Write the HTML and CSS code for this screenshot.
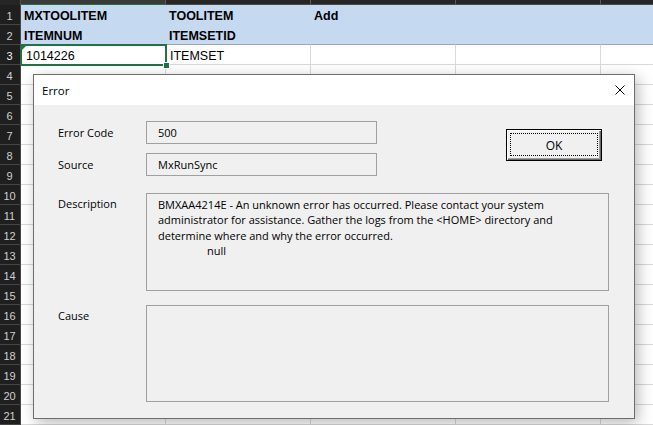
FILE: index.html
```html
<!DOCTYPE html>
<html>
<head>
<meta charset="utf-8">
<link rel="stylesheet" href="styles.css">
</head>
<body>
<div class="sheet">
  <div class="row colhead">
    <div class="corner"></div><div class="ch sel"></div><div class="ch"></div><div class="ch"></div><div class="ch"></div><div class="ch last"></div>
  </div>
  <div class="row blue top"><div class="rn">1</div><div class="c b">MXTOOLITEM</div><div class="c b">TOOLITEM</div><div class="c b">Add</div><div class="c"></div><div class="c last"></div></div>
  <div class="row blue bottom"><div class="rn">2</div><div class="c b">ITEMNUM</div><div class="c b">ITEMSETID</div><div class="c"></div><div class="c"></div><div class="c last"></div></div>
  <div class="row"><div class="rn selrow">3</div><div class="c active">1014226</div><div class="c">ITEMSET</div><div class="c"></div><div class="c"></div><div class="c last"></div></div>
  <div class="row"><div class="rn">4</div><div class="c"></div><div class="c"></div><div class="c"></div><div class="c"></div><div class="c last"></div></div>
  <div class="row"><div class="rn">5</div><div class="c"></div><div class="c"></div><div class="c"></div><div class="c"></div><div class="c last"></div></div>
  <div class="row"><div class="rn">6</div><div class="c"></div><div class="c"></div><div class="c"></div><div class="c"></div><div class="c last"></div></div>
  <div class="row"><div class="rn">7</div><div class="c"></div><div class="c"></div><div class="c"></div><div class="c"></div><div class="c last"></div></div>
  <div class="row"><div class="rn">8</div><div class="c"></div><div class="c"></div><div class="c"></div><div class="c"></div><div class="c last"></div></div>
  <div class="row"><div class="rn">9</div><div class="c"></div><div class="c"></div><div class="c"></div><div class="c"></div><div class="c last"></div></div>
  <div class="row"><div class="rn">10</div><div class="c"></div><div class="c"></div><div class="c"></div><div class="c"></div><div class="c last"></div></div>
  <div class="row"><div class="rn">11</div><div class="c"></div><div class="c"></div><div class="c"></div><div class="c"></div><div class="c last"></div></div>
  <div class="row"><div class="rn">12</div><div class="c"></div><div class="c"></div><div class="c"></div><div class="c"></div><div class="c last"></div></div>
  <div class="row"><div class="rn">13</div><div class="c"></div><div class="c"></div><div class="c"></div><div class="c"></div><div class="c last"></div></div>
  <div class="row"><div class="rn">14</div><div class="c"></div><div class="c"></div><div class="c"></div><div class="c"></div><div class="c last"></div></div>
  <div class="row"><div class="rn">15</div><div class="c"></div><div class="c"></div><div class="c"></div><div class="c"></div><div class="c last"></div></div>
  <div class="row"><div class="rn">16</div><div class="c"></div><div class="c"></div><div class="c"></div><div class="c"></div><div class="c last"></div></div>
  <div class="row"><div class="rn">17</div><div class="c"></div><div class="c"></div><div class="c"></div><div class="c"></div><div class="c last"></div></div>
  <div class="row"><div class="rn">18</div><div class="c"></div><div class="c"></div><div class="c"></div><div class="c"></div><div class="c last"></div></div>
  <div class="row"><div class="rn">19</div><div class="c"></div><div class="c"></div><div class="c"></div><div class="c"></div><div class="c last"></div></div>
  <div class="row"><div class="rn">20</div><div class="c"></div><div class="c"></div><div class="c"></div><div class="c"></div><div class="c last"></div></div>
  <div class="row"><div class="rn">21</div><div class="c"></div><div class="c"></div><div class="c"></div><div class="c"></div><div class="c last"></div></div>
</div>

<div class="dialog">
  <div class="titlebar">
    <span class="title">Error</span>
    <svg class="close" width="10" height="10" viewBox="0 0 10 10"><path d="M0.5 0.5 L9.5 9.5 M9.5 0.5 L0.5 9.5" stroke="#000" stroke-width="1" fill="none"/></svg>
  </div>
  <div class="body">
    <div class="lbl r1">Error Code</div>
    <div class="field r1">500</div>
    <button class="ok">OK</button>
    <div class="lbl r2">Source</div>
    <div class="field r2">MxRunSync</div>
    <div class="lbl lbl-top r3">Description</div>
    <div class="area r3">BMXAA4214E - An unknown error has occurred. Please contact your system<br>administrator for assistance. Gather the logs from the &lt;HOME&gt; directory and<br>determine where and why the error occurred.<br><span class="indent">null</span></div>
    <div class="lbl lbl-top r4">Cause</div>
    <div class="area r4"></div>
  </div>
</div>
</body>
</html>
```

FILE: styles.css
```css
html, body {
  margin: 0;
  padding: 0;
}
body {
  width: 653px;
  height: 425px;
  overflow: hidden;
  background: #ffffff;
  position: relative;
  font-family: "Liberation Sans", Arial, sans-serif;
}

/* ---------- spreadsheet ---------- */
.sheet {
  display: flex;
  flex-direction: column;
}
.row {
  display: flex;
  height: 20px;
}
.colhead {
  height: 5px;
}
.corner {
  width: 21px;
  background: #262626;
  border-right: 1px solid #505050;
  box-sizing: border-box;
}
.ch {
  width: 145px;
  box-sizing: border-box;
  background: #262626;
  border-right: 1px solid #5a5a5a;
  border-bottom: 1px solid #4a4a4a;
}
.ch.sel {
  background: #3a3a3a;
  border-bottom: 1px solid #217346;
}
.ch.last, .c.last {
  flex: 1;
  border-right: none;
}
.rn {
  width: 21px;
  flex: none;
  box-sizing: border-box;
  background: #1f1f1f;
  border-bottom: 1px solid #454545;
  border-right: 1px solid #454545;
  color: #cfcfcf;
  font-family: "Liberation Sans", Arial, sans-serif;
  font-size: 11px;
  line-height: 18px;
  text-align: center;
  padding-top: 2px;
  padding-right: 1px;
}
.rn.selrow {
  color: #f2f2f2;
}
.c {
  width: 145px;
  flex: none;
  box-sizing: border-box;
  border-right: 1px solid #d9d9d9;
  border-bottom: 1px solid #d9d9d9;
  padding: 3px 0 0 4px;
  font-size: 12.5px;
  line-height: 16px;
  color: #000;
  white-space: nowrap;
  overflow: visible;
}
.c.b {
  font-weight: bold;
  padding-left: 3px;
}
.blue .c {
  background: #c5d9f1;
  border-right-color: #c5d9f1;
}
.blue.top .c {
  border-bottom-color: #c5d9f1;
}
.blue.bottom .c {
  border-bottom-color: #a6a6a6;
}
.c.active {
  position: relative;
  z-index: 1;
  outline: 2px solid #217346;
  outline-offset: -1px;
  padding-left: 5px;
}
.c.active::before {
  content: "";
  position: absolute;
  left: 1px;
  top: 1px;
  border-top: 4px solid #217346;
  border-right: 4px solid transparent;
}
.c.active::after {
  content: "";
  position: absolute;
  right: -4px;
  bottom: -4px;
  width: 5px;
  height: 5px;
  background: #217346;
  border: 1px solid #ffffff;
  box-sizing: content-box;
  margin: -1px;
}

/* ---------- dialog ---------- */
.dialog {
  position: absolute;
  left: 33px;
  top: 74px;
  width: 600px;
  border: 1px solid #6e6e6e;
  background: #f0f0f0;
  box-shadow: 3px 4px 14px rgba(0, 0, 0, 0.28);
  font-family: "Open Sans", "Noto Sans", sans-serif;
  font-size: 11px;
  color: #000;
  z-index: 5;
}
.titlebar {
  height: 30px;
  background: #ffffff;
  display: flex;
  align-items: center;
  justify-content: space-between;
  padding: 0 9px 0 8px;
}
.title {
  font-size: 11.5px;
}
.close {
  display: block;
}
.body {
  display: grid;
  grid-template-columns: 88px 231px 1fr;
  padding: 16px 25px 16px 24px;
}
.lbl {
  grid-column: 1;
  align-self: center;
  line-height: 15px;
}
.lbl-top {
  align-self: start;
  padding-top: 3px;
  line-height: 15.33px;
}
.r1 { grid-row: 1; }
.r2 { grid-row: 2; margin-top: 9px; }
.r3 { grid-row: 3; margin-top: 17px; }
.r4 { grid-row: 4; margin-top: 14px; }
.field {
  grid-column: 2;
  height: 23px;
  box-sizing: border-box;
  border: 1px solid #a0a0a0;
  padding-left: 11px;
  line-height: 21px;
}
.area {
  grid-column: 2 / 4;
  box-sizing: border-box;
  border: 1px solid #a0a0a0;
  padding: 3px 0 0 11px;
  line-height: 15.33px;
  white-space: nowrap;
}
.area.r3 { height: 98px; }
.area.r4 { height: 97px; }
.indent {
  padding-left: 49px;
}
.ok {
  grid-column: 3;
  grid-row: 1 / 3;
  justify-self: end;
  align-self: start;
  margin: 8px 7px 0 0;
  width: 96px;
  height: 32px;
  position: relative;
  box-sizing: border-box;
  border: 1px solid #000;
  background: #f0f0f0;
  box-shadow: inset 1px 1px 0 #ffffff, inset -1px -1px 0 #696969, inset -2px -2px 0 #a0a0a0;
  font-family: "Open Sans", "Noto Sans", sans-serif;
  font-size: 12px;
  color: #000;
  padding: 0;
}
.ok::after {
  content: "";
  position: absolute;
  left: 3px;
  top: 3px;
  right: 3px;
  bottom: 4px;
  border: 1px dotted #000;
}
```
